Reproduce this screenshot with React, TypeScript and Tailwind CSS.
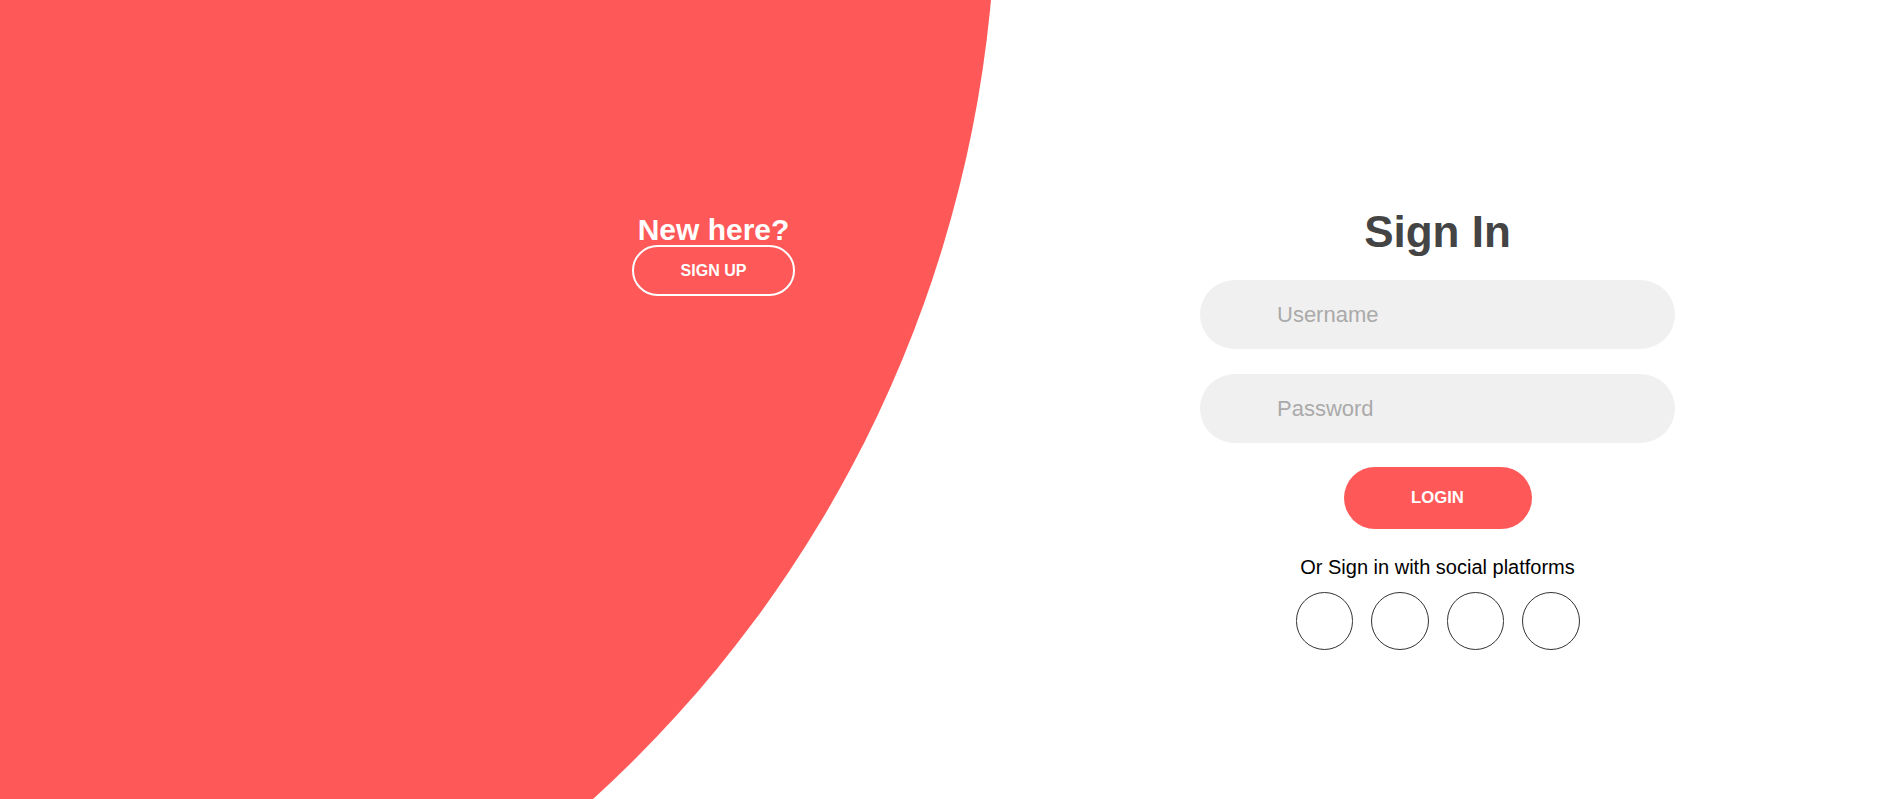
const font = "font-['Liberation_Sans',Arial,sans-serif]";

const SocialIcon = () => (
  <a
    href="#"
    className="w-[57.5px] h-[57.5px] rounded-full border border-[#333] flex items-center justify-center"
  />
);

export default function App() {
  return (
    <div className={`relative h-[799px] w-full overflow-hidden bg-white ${font}`}>
      {/* big background circle */}
      <div className="absolute left-[-1462px] top-[-1340px] w-[2458px] h-[2458px] rounded-full bg-[#ff5858]" />

      <div className="relative flex items-start">
        {/* left panel */}
        <div className="ml-[632px] w-[163px] flex flex-col items-center pt-[215px] text-white">
          <h3 className="text-[30px] leading-none font-bold whitespace-nowrap">New here?</h3>
          <button className="w-[163px] h-[51px] rounded-full border-2 border-white bg-transparent text-white text-[16px] font-bold uppercase">
            Sign up
          </button>
        </div>

        {/* sign in form */}
        <form className="ml-[405px] w-[475px] flex flex-col items-center pt-[206px]">
          <h2 className="text-[44px] leading-[51px] font-bold text-[#444] mb-[23px]">Sign In</h2>
          <input
            type="text"
            placeholder="Username"
            className="w-full h-[69px] rounded-full bg-[#f0f0f0] pl-[77px] pr-6 text-[22px] text-[#333] outline-none placeholder:text-[#aaa]"
          />
          <input
            type="password"
            placeholder="Password"
            className="mt-[25px] w-full h-[69px] rounded-full bg-[#f0f0f0] pl-[77px] pr-6 text-[22px] text-[#333] outline-none placeholder:text-[#aaa]"
          />
          <button
            type="button"
            className="mt-[24px] w-[188px] h-[62px] rounded-full bg-[#ff5858] text-white text-[16.7px] font-bold uppercase"
          >
            Login
          </button>
          <p className="mt-[27px] text-[20px] leading-[23px] text-black">Or Sign in with social platforms</p>
          <div className="mt-[13px] flex gap-[18px]">
            <SocialIcon />
            <SocialIcon />
            <SocialIcon />
            <SocialIcon />
          </div>
        </form>
      </div>
    </div>
  );
}
